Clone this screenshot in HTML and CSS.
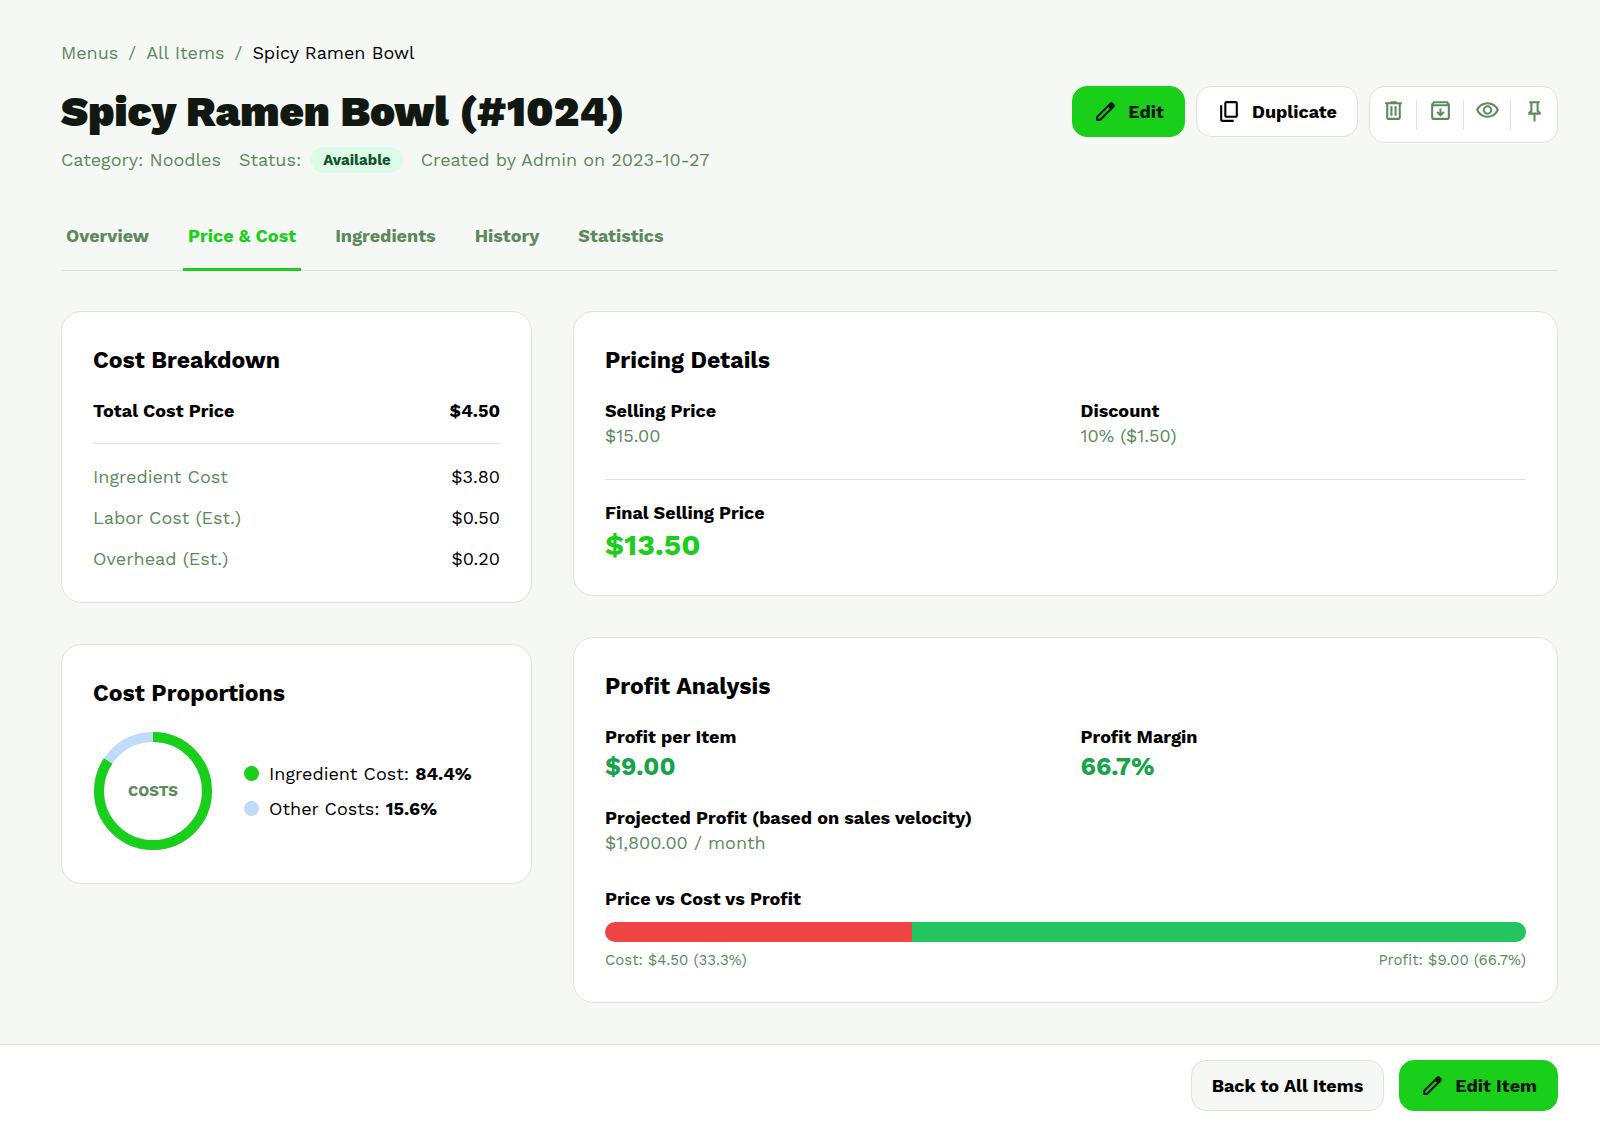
FILE: index.html
```html
<!DOCTYPE html>
<html lang="en">
<head>
<meta charset="utf-8">
<meta name="viewport" content="width=device-width, initial-scale=1">
<title>Spicy Ramen Bowl (#1024)</title>
<link rel="stylesheet" href="styles.css">
</head>
<body>
<svg class="sprite" aria-hidden="true">
  <symbol id="edit" viewBox="0 -960 960 960"><path d="M200-200h57l391-391-57-57-391 391v57Zm-80 80v-170l528-527q12-11 26.500-17t30.500-6q16 0 31 6t26 18l55 56q12 11 17.500 26t5.500 30q0 16-5.500 30.500T817-647L290-120H120Z"/></symbol>
  <symbol id="copy" viewBox="0 -960 960 960"><path d="M360-240q-33 0-56.500-23.500T280-320v-480q0-33 23.500-56.500T360-880h360q33 0 56.500 23.500T800-800v480q0 33-23.500 56.500T720-240H360Zm0-80h360v-480H360v480ZM200-80q-33 0-56.500-23.500T120-160v-560h80v560h440v80H200Z"/></symbol>
  <symbol id="delete" viewBox="0 -960 960 960"><path d="M280-120q-33 0-56.500-23.500T200-200v-520h-40v-80h200v-40h240v40h200v80h-40v520q0 33-23.500 56.500T680-120H280Zm400-600H280v520h400v-520ZM360-280h80v-360h-80v360Zm160 0h80v-360h-80v360Z"/></symbol>
  <symbol id="archive" viewBox="0 -960 960 960"><path d="m480-240 160-160-56-56-64 64v-168h-80v168l-64-64-56 56 160 160ZM200-640v440h560v-440H200Zm0 520q-33 0-56.500-23.500T120-200v-499q0-14 4.500-27t13.500-24l50-61q11-14 27.500-21.500T250-840h460q18 0 34.500 7.500T772-811l50 61q9 11 13.500 24t4.500 27v499q0 33-23.500 56.500T760-120H200Zm16-600h528l-34-40H250l-34 40Z"/></symbol>
  <symbol id="visibility" viewBox="0 -960 960 960"><path d="M480-320q75 0 127.500-52.500T660-500q0-75-52.500-127.500T480-680q-75 0-127.500 52.500T300-500q0 75 52.500 127.500T480-320Zm0-72q-45 0-76.500-31.500T372-500q0-45 31.500-76.500T480-608q45 0 76.500 31.500T588-500q0 45-31.500 76.500T480-392Zm0 192q-146 0-266-81.500T40-500q54-137 174-218.500T480-800q146 0 266 81.500T920-500q-54 137-174 218.500T480-200Zm0-80q113 0 207.500-59.500T832-500q-50-101-144.500-160.500T480-720q-113 0-207.500 59.500T128-500q50 101 144.500 160.500T480-280Z"/></symbol>
  <symbol id="pin" viewBox="0 -960 960 960"><path d="m640-480 80 80v80H520v260h-80v-260H240v-80l80-80v-280h-40v-80h400v80h-40v280Zm-286 80h252l-46-46v-314H400v314l-46 46Z"/></symbol>
</svg>
<main class="page">
  <nav class="breadcrumb" aria-label="Breadcrumb">
    <a href="#">Menus</a><span class="sep">/</span><a href="#">All Items</a><span class="sep">/</span><span class="current">Spicy Ramen Bowl</span>
  </nav>
  <header class="header">
    <div>
      <h1 class="title">Spicy Ramen Bowl (#1024)</h1>
      <div class="meta">
        <span>Category: Noodles</span>
        <span class="status">Status: <span class="badge">Available</span></span>
        <span>Created by Admin on 2023-10-27</span>
      </div>
    </div>
    <div class="actions">
      <button class="btn btn-primary" type="button"><svg class="icon"><use href="#edit"/></svg>Edit</button>
      <button class="btn btn-white" type="button"><svg class="icon"><use href="#copy"/></svg>Duplicate</button>
      <div class="tools">
        <button class="tool" type="button" aria-label="Delete"><svg class="icon"><use href="#delete"/></svg></button>
        <button class="tool" type="button" aria-label="Archive"><svg class="icon"><use href="#archive"/></svg></button>
        <button class="tool" type="button" aria-label="Preview"><svg class="icon"><use href="#visibility"/></svg></button>
        <button class="tool" type="button" aria-label="Pin"><svg class="icon"><use href="#pin"/></svg></button>
      </div>
    </div>
  </header>
  <nav class="tabs" aria-label="Item sections">
    <a class="tab" href="#">Overview</a>
    <a class="tab active" href="#" aria-current="page">Price &amp; Cost</a>
    <a class="tab" href="#">Ingredients</a>
    <a class="tab" href="#">History</a>
    <a class="tab" href="#">Statistics</a>
  </nav>
  <div class="columns">
    <div class="stack">
      <section class="card">
        <h2 class="card-title">Cost Breakdown</h2>
        <dl class="costs">
          <div class="cost total"><dt>Total Cost Price</dt><dd>$4.50</dd></div>
          <div class="cost"><dt>Ingredient Cost</dt><dd>$3.80</dd></div>
          <div class="cost"><dt>Labor Cost (Est.)</dt><dd>$0.50</dd></div>
          <div class="cost"><dt>Overhead (Est.)</dt><dd>$0.20</dd></div>
        </dl>
      </section>
      <section class="card">
        <h2 class="card-title">Cost Proportions</h2>
        <div class="chart">
          <svg class="donut" viewBox="0 0 120 120" role="img" aria-label="Cost proportions">
            <circle class="ring ring-other" cx="60" cy="60" r="54"/>
            <circle class="ring ring-main" cx="60" cy="60" r="54" pathLength="100" stroke-dasharray="84.4 15.6" transform="rotate(-90 60 60)"/>
            <text class="donut-label" x="60" y="65">COSTS</text>
          </svg>
          <ul class="legend">
            <li><span class="dot dot-main"></span><span>Ingredient Cost: <b>84.4%</b></span></li>
            <li><span class="dot dot-other"></span><span>Other Costs: <b>15.6%</b></span></li>
          </ul>
        </div>
      </section>
    </div>
    <div class="stack">
      <section class="card">
        <h2 class="card-title">Pricing Details</h2>
        <div class="pair divided">
          <div><h3 class="label">Selling Price</h3><p class="value">$15.00</p></div>
          <div><h3 class="label">Discount</h3><p class="value">10% ($1.50)</p></div>
        </div>
        <h3 class="label">Final Selling Price</h3>
        <p class="price">$13.50</p>
      </section>
      <section class="card">
        <h2 class="card-title">Profit Analysis</h2>
        <div class="profit">
          <div class="pair">
            <div><h3 class="label">Profit per Item</h3><p class="figure">$9.00</p></div>
            <div><h3 class="label">Profit Margin</h3><p class="figure">66.7%</p></div>
          </div>
          <div><h3 class="label">Projected Profit (based on sales velocity)</h3><p class="value">$1,800.00 / month</p></div>
        </div>
        <h3 class="label">Price vs Cost vs Profit</h3>
        <div class="bar"><div class="bar-cost" style="width:33.3%"></div><div class="bar-profit"></div></div>
        <div class="captions"><span>Cost: $4.50 (33.3%)</span><span>Profit: $9.00 (66.7%)</span></div>
      </section>
    </div>
  </div>
</main>
<footer class="footer">
  <button class="btn btn-muted" type="button">Back to All Items</button>
  <button class="btn btn-primary" type="button"><svg class="icon"><use href="#edit"/></svg>Edit Item</button>
</footer>
</body>
</html>
```
FILE: styles.css
```css
:root {
  --green: #19cf19;
  --text: #111811;
  --muted: #5c8a5c;
  --line: #dce5dc;
  --bg: #f6f8f6;
}
* { box-sizing: border-box; }
body {
  margin: 0;
  min-height: 100vh;
  display: flex;
  flex-direction: column;
  background: var(--bg);
  color: #000;
  font: 18px/26px "Work Sans", Inter, sans-serif;
}
h1, h2, h3, p, dl, dd, ul { margin: 0; padding: 0; }
a { text-decoration: none; color: inherit; }
.sprite { display: none; }
.icon { width: 25px; height: 25px; flex: none; fill: currentColor; display: block; }

.page { flex: 1; padding: 40px 42px 41px 61px; }

.breadcrumb { display: flex; gap: 10px; color: var(--muted); }
.breadcrumb .current { color: #000; }

.header { display: flex; justify-content: space-between; align-items: flex-start; margin-top: 20px; }
.title { font-size: 42px; line-height: 52px; font-weight: 900; color: var(--text); }
.meta { display: flex; gap: 18px; margin-top: 9px; color: var(--muted); }
.status { display: flex; gap: 10px; }
.badge { padding: 0 12px; border-radius: 13px; background: #dcfce7; color: #14532d; font-size: 15px; font-weight: 700; }

.actions { display: flex; gap: 11px; align-items: flex-start; }
.btn {
  height: 51px;
  padding: 0 20px;
  display: flex;
  align-items: center;
  gap: 10px;
  border: 1px solid var(--line);
  border-radius: 15px;
  font: inherit;
  font-weight: 700;
  color: #000;
}
.btn-primary { background: var(--green); border-color: var(--green); color: var(--text); }
.btn-white { background: #fff; }
.btn-muted { background: var(--bg); }
.tools { display: flex; padding: 13px 0 12px; border: 1px solid var(--line); border-radius: 15px; background: #fff; }
.tool { box-sizing: content-box; height: 20px; width: 46px; padding: 0 0 10px; display: flex; align-items: center; justify-content: center; border: 0; background: none; color: var(--muted); }
.tool + .tool { border-left: 1px solid var(--line); }

.tabs { display: flex; gap: 29px; margin-top: 40px; border-bottom: 1px solid var(--line); color: var(--muted); font-weight: 700; }
.tab { padding: 10px 5px 19px; margin-bottom: -1px; border-bottom: 3px solid transparent; }
.tab.active { color: var(--green); border-color: var(--green); }

.columns { display: grid; grid-template-columns: minmax(0, 471fr) minmax(0, 985fr); gap: 41px; margin-top: 40px; align-items: start; }
.stack { display: grid; gap: 41px; }
.card { padding: 32px 31px 30px; border: 1px solid var(--line); border-radius: 20px; background: #fff; }
.card-title { font-size: 23px; line-height: 34px; margin-bottom: 20px; font-weight: 700; }

.costs { display: grid; gap: 15px; }
.cost { display: flex; justify-content: space-between; }
.cost dt { color: var(--muted); }
.cost.total { padding-bottom: 19px; margin-bottom: 5px; border-bottom: 1px solid var(--line); font-weight: 700; }
.cost.total dt { color: inherit; }

.chart { display: flex; align-items: center; gap: 31px; padding-bottom: 2px; }
.donut { width: 120px; height: 120px; }
.ring { fill: none; stroke-width: 10; }
.ring-main { stroke: var(--green); }
.ring-other { stroke: #bfdbfe; }
.donut-label { fill: var(--muted); font-size: 15px; font-weight: 700; text-anchor: middle; }
.legend { display: grid; gap: 9px; list-style: none; }
.legend b { font-weight: 700; }
.legend li { display: flex; align-items: center; gap: 10px; }
.dot { width: 15px; height: 15px; border-radius: 50%; }
.dot-main { background: var(--green); }
.dot-other { background: #bfdbfe; }

.pair { display: grid; grid-template-columns: 1fr 1fr; gap: 30px; }
.divided { padding-bottom: 30px; margin-bottom: 20px; border-bottom: 1px solid var(--line); }
.label { font-size: 18px; line-height: 25px; font-weight: 700; }
.value { color: var(--muted); }
.price { font-size: 30px; line-height: 40px; font-weight: 700; color: var(--green); }
.profit { display: grid; gap: 20px; margin-bottom: 30px; }
.figure { font-size: 25px; line-height: 36px; font-weight: 700; color: #16a34a; }
.bar { display: flex; height: 20px; margin-top: 11px; border-radius: 10px; overflow: hidden; }
.bar-cost { background: #ef4444; }
.bar-profit { flex: 1; background: #22c55e; }
.captions { display: flex; justify-content: space-between; margin-top: 6px; color: var(--muted); font-size: 15px; line-height: 24px; }

.footer { display: flex; justify-content: flex-end; gap: 15px; padding: 15px 42px; border-top: 1px solid var(--line); background: #fff; }
```
